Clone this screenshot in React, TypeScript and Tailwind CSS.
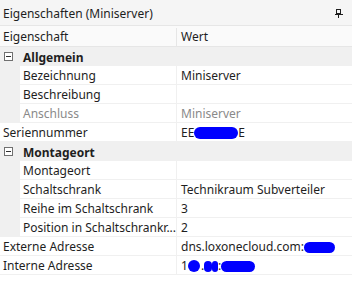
import React from "react";

const font = { fontFamily: '"Segoe UI", "Noto Sans", "Open Sans", sans-serif' };

function Minus() {
  return (
    <svg width="9" height="9" viewBox="0 0 9 9" className="shrink-0">
      <rect x="0.5" y="0.5" width="8" height="8" fill="white" stroke="#707070" />
      <line x1="2" y1="4.5" x2="7" y2="4.5" stroke="#303030" />
    </svg>
  );
}

function Blob({ w, h = 11 }: { w: number; h?: number }) {
  return <span className="inline-block rounded-full bg-[#0000ff] align-middle" style={{ width: w, height: h }} />;
}

type Row = { kind: "cat" | "child" | "top"; name: string; value?: React.ReactNode; muted?: boolean };

const rows: Row[] = [
  { kind: "cat", name: "Allgemein" },
  { kind: "child", name: "Bezeichnung", value: "Miniserver" },
  { kind: "child", name: "Beschreibung", value: "" },
  { kind: "child", name: "Anschluss", value: "Miniserver", muted: true },
  {
    kind: "top",
    name: "Seriennummer",
    value: (
      <span className="flex items-center">
        EE<Blob w={44} h={12} />E
      </span>
    ),
  },
  { kind: "cat", name: "Montageort" },
  { kind: "child", name: "Montageort", value: "" },
  { kind: "child", name: "Schaltschrank", value: "Technikraum Subverteiler" },
  { kind: "child", name: "Reihe im Schaltschrank", value: "3" },
  { kind: "child", name: "Position in Schaltschrankr...", value: "2" },
  {
    kind: "top",
    name: "Externe Adresse",
    value: (
      <span className="flex items-center">
        dns.loxonecloud.com:<Blob w={31} h={11} />
      </span>
    ),
  },
  {
    kind: "top",
    name: "Interne Adresse",
    value: (
      <span className="flex items-center">
        1<Blob w={12} h={12} />
        <span className="inline-block w-[1px]" />.
        <Blob w={8} h={11} />
        <Blob w={6} h={11} />:
        <Blob w={34} h={11} />
      </span>
    ),
  },
];

export default function App() {
  return (
    <div className="w-[352px] h-[287px] bg-white text-[12px] text-[#1e1e1e] overflow-hidden" style={font}>
      <div className="h-[26px] bg-[#f5f5f5] flex items-center justify-between pl-[3px] pr-[9px] pt-[2px] border-b border-[#e6e6e6]">
        <span>Eigenschaften (Miniserver)</span>
        <svg width="8" height="9" viewBox="0 0 8 9">
          <rect x="1.5" y="0.5" width="4" height="4" fill="none" stroke="#1e1e1e" />
          <line x1="0" y1="5.5" x2="8" y2="5.5" stroke="#1e1e1e" />
          <line x1="3.5" y1="5" x2="3.5" y2="9" stroke="#1e1e1e" />
        </svg>
      </div>
      <div className="h-[21px] flex bg-[#fafafa] border-b border-[#e6e6e6] pt-[2px]">
        <div className="w-[177px] border-r border-[#e6e6e6] pl-[3px] flex items-center">Eigenschaft</div>
        <div className="flex-1 pl-[4px] flex items-center">Wert</div>
      </div>
      {rows.map((r, i) => {
        if (r.kind === "cat") {
          return (
            <div key={i} className="h-[19px] flex items-center bg-[#f0f0f0] pl-[4px]">
              <Minus />
              <span className="ml-[10px] font-bold pt-[2px]">{r.name}</span>
            </div>
          );
        }
        return (
          <div key={i} className="h-[19px] flex">
            {r.kind === "child" && <div className="w-[20px] bg-[#f0f0f0] shrink-0" />}
            <div
              className={`${r.kind === "child" ? "w-[157px] pl-[3px]" : "w-[177px] pl-[3px]"} flex items-center pt-[2px] border-b border-r border-[#f0f0f0] ${r.muted ? "text-[#8a8a8a]" : ""}`}
            >
              <span className="whitespace-nowrap">{r.name}</span>
            </div>
            <div className={`flex-1 pl-[4px] flex items-center pt-[2px] border-b border-[#f0f0f0] whitespace-nowrap ${r.muted ? "text-[#8a8a8a]" : ""}`}>
              {r.value}
            </div>
          </div>
        );
      })}
    </div>
  );
}
